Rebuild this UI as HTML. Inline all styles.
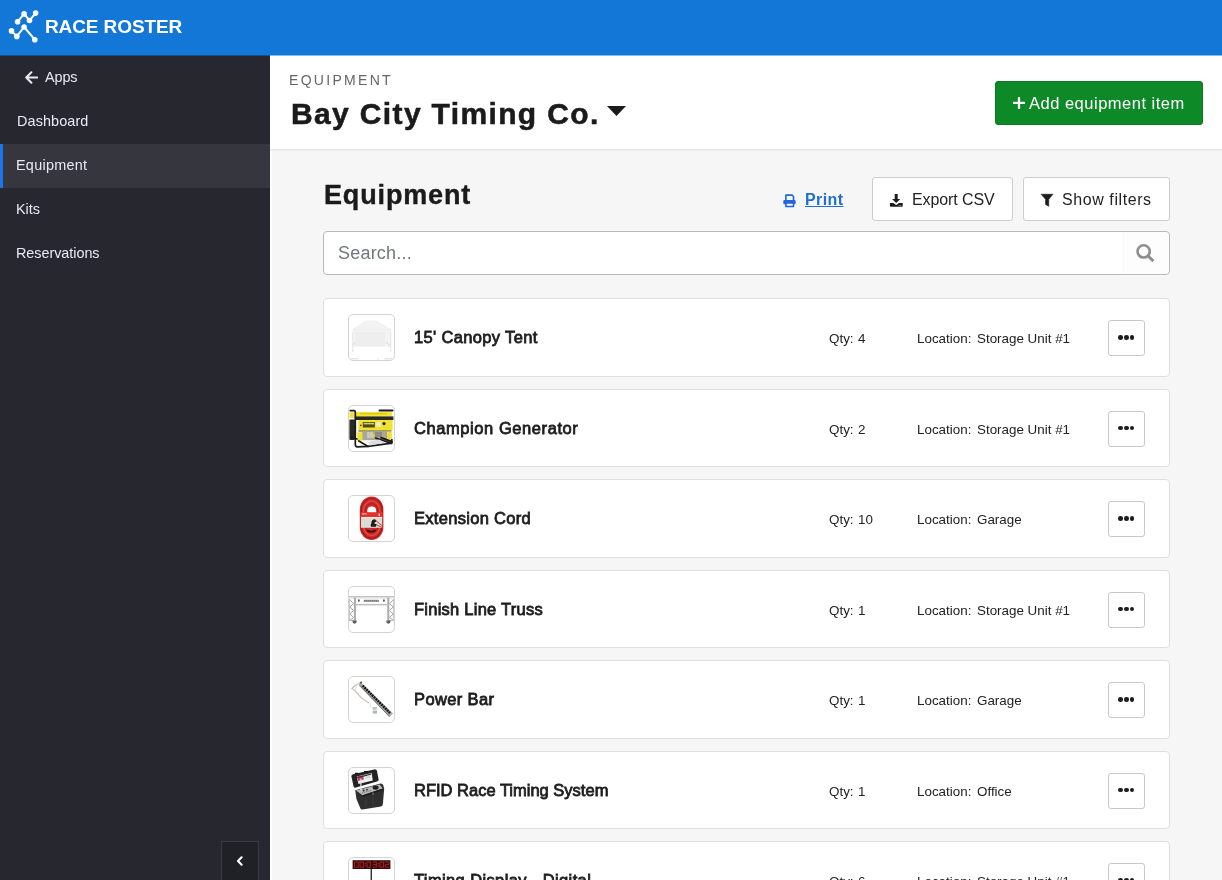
<!DOCTYPE html>
<html lang="en">
<head>
<meta charset="utf-8">
<title>Equipment - Bay City Timing Co.</title>
<style>
*{box-sizing:border-box;margin:0;padding:0}
html,body{width:1222px;height:880px;overflow:hidden}
body{font-family:"Liberation Sans",sans-serif;background:#f6f6f6;color:#1f1f1f;position:relative}
.abs{position:absolute}
.t{position:absolute;white-space:nowrap;line-height:1;will-change:transform}
svg{display:block;position:absolute}
/* top bar */
#topbar{left:0;top:0;width:1222px;height:55px;background:#1277d7}
#brand{left:44.8px;top:17px;font-size:19px;font-weight:bold;color:#fff;letter-spacing:-.1px}
/* sidebar */
#side{left:0;top:55px;width:270px;height:825px;background:#27282f}
#side .nav{position:absolute;left:0;width:270px;height:44px}
#side .nav.on{background:#36373e}
#side .nav.on:before{content:"";position:absolute;left:0;top:0;width:3px;height:44px;background:#1d73e8}
#side .t{color:#e9e9f6;font-size:14.4px}
#collapse{left:221px;top:841px;width:38px;height:40px;background:#202127;border:1px solid #3b3c43}
/* header */
#hdr{left:270px;top:55px;width:952px;height:95px;background:#fff;border-bottom:1px solid #e6e6e6;box-shadow:0 1px 0 #ededed}
#strip{left:270px;top:151px;width:1.5px;height:729px;background:#fff}
#kicker{left:288.8px;top:73px;font-size:14px;letter-spacing:2.3px;color:#666}
#org{left:291.3px;top:99.3px;font-size:30px;font-weight:bold;color:#1b1b1b;letter-spacing:1.36px;-webkit-text-stroke:.55px #1b1b1b}
#addbtn{left:995px;top:81px;width:208px;height:44px;background:#0e8928;border:1px solid #0b7922;border-radius:3px}
#addbtn .t{color:#fff;font-size:16.5px;letter-spacing:.5px}
/* toolbar */
#h2{left:323.5px;top:182.3px;font-size:27px;font-weight:bold;color:#1b1b1b;letter-spacing:.85px;-webkit-text-stroke:.4px #1b1b1b}
#print{left:804.6px;top:192.3px;letter-spacing:.4px;font-size:16px;font-weight:bold;color:#1f6fd1;text-decoration:underline}
.btn{position:absolute;background:#fff;border:1px solid #cdcdcd;border-radius:3px}
.btn .t{font-size:16px;color:#222}
#search{left:323px;top:231px;width:846.5px;height:43.5px;background:#fff;border:1px solid #b9b9b9;border-radius:4px}
#search .ph{left:13.5px;top:12px;font-size:18px;letter-spacing:.2px;color:#72777c}
/* cards */
.card{position:absolute;left:323px;width:846.5px;height:78.5px;background:#fff;border:1px solid #dfdfdf;border-radius:4px}
.thumb{position:absolute;left:24px;top:15px;width:47px;height:47px;border:1px solid #d4d4d4;border-radius:5px;background:#fff;overflow:hidden}
.thumb svg{left:0;top:0}
.card .name{left:89.5px;top:30px;font-size:16.5px;font-weight:normal;color:#1d1d1d;-webkit-text-stroke:.8px #1d1d1d}
.card .q,.card .qv,.card .l,.card .lv{top:33px;font-size:13.4px;color:#222}
.card .q{left:504.6px}.card .qv{left:534px}
.card .l{left:592.5px}.card .lv{left:652.5px}
.more{position:absolute;left:784px;top:21px;width:37px;height:36px;border:1px solid #c9c9c9;border-radius:3px;background:#fff}
.more i{position:absolute;top:14px;width:4.6px;height:4.6px;border-radius:50%;background:#1d1d1d}
</style>
</head>
<body>
<div id="topbar" class="abs"></div>
<div class="abs" style="left:0;top:55px;width:1222px;height:1px;background:rgba(18,119,215,.5);z-index:5"></div>
<svg style="left:6px;top:8px" width="36" height="38" viewBox="6 8 36 38">
  <g fill="none" stroke="#fff" stroke-width="2" stroke-linecap="round" stroke-linejoin="round">
    <polyline points="17.6,21.7 24.1,13.9 29.5,20.5 35.6,13.1"/>
    <polyline points="11.5,30.9 16.8,36.4 24.1,27 34.8,39.7"/>
  </g>
  <g fill="#fff">
    <circle cx="17.6" cy="21.7" r="2.8"/><circle cx="24.1" cy="13.9" r="2.8"/><circle cx="29.5" cy="20.5" r="2.8"/><circle cx="35.6" cy="13.1" r="2.8"/>
    <circle cx="11.5" cy="30.9" r="2.8"/><circle cx="16.8" cy="36.4" r="2.8"/><circle cx="24.1" cy="27" r="2.8"/><circle cx="34.8" cy="39.7" r="2.8"/>
  </g>
</svg>
<div id="brand" class="t">RACE ROSTER</div>

<div id="side" class="abs">
  <div class="nav" style="top:0"></div>
  <div class="nav" style="top:44px"></div>
  <div class="nav on" style="top:89px"></div>
  <div class="nav" style="top:132px"></div>
  <div class="nav" style="top:176px"></div>
  <svg style="left:24.5px;top:15.5px" width="13.5" height="13" viewBox="0 0 13.5 13"><path d="M6.4 1.2 L1.2 6.5 L6.4 11.8 M1.4 6.5 H12.3" fill="none" stroke="#e9e9f6" stroke-width="2" stroke-linecap="round" stroke-linejoin="round"/></svg>
  <div class="t" style="left:45px;top:15px;letter-spacing:-.1px">Apps</div>
  <div class="t" style="left:16.5px;top:59px;letter-spacing:.12px">Dashboard</div>
  <div class="t" style="left:16px;top:103px;letter-spacing:.27px">Equipment</div>
  <div class="t" style="left:16.4px;top:147.4px;letter-spacing:-.05px">Kits</div>
  <div class="t" style="left:16.4px;top:191.4px;letter-spacing:-.04px">Reservations</div>
</div>
<div id="collapse" class="abs"><svg style="left:13.6px;top:14px" width="8" height="10" viewBox="0 0 8 10"><path d="M5.6 1.3 L2 5 L5.6 8.7" fill="none" stroke="#fff" stroke-width="2.1" stroke-linecap="round" stroke-linejoin="round"/></svg></div>

<div id="hdr" class="abs"></div>
<div id="strip" class="abs"></div>
<div id="kicker" class="t">EQUIPMENT</div>
<div id="org" class="t">Bay City Timing Co.</div>
<svg style="left:607px;top:106px" width="19" height="10" viewBox="0 0 19 10"><path d="M0 0 H19 L9.5 10 Z" fill="#1b1b1b"/></svg>
<div id="addbtn" class="abs">
  <svg style="left:17px;top:14.6px" width="12" height="12" viewBox="0 0 12 12"><path d="M6 .9 V10.9 M.7 5.9 H11.3" stroke="#fff" stroke-width="2.3" stroke-linecap="round" fill="none"/></svg>
  <div class="t" style="left:33px;top:12.7px">Add equipment item</div>
</div>

<div id="h2" class="t">Equipment</div>
<svg style="left:783px;top:193.5px" width="14" height="14" viewBox="0 0 14 14"><g fill="none" stroke="#1f66da" stroke-width="1.6" stroke-linejoin="round"><path d="M2.9 5.9 V1.1 H9.1 L10.5 2.5 V5.9"/><rect x="1.1" y="6.7" width="10.8" height="2.8" rx=".6" fill="#1f66da"/><rect x="2.9" y="9" width="7.6" height="3.5" fill="#f6f6f6"/></g></svg>
<div id="print" class="t">Print</div>

<div class="btn" style="left:872px;top:177px;width:141px;height:44px">
  <svg style="left:16px;top:15px" width="15" height="15" viewBox="0 0 15 15"><path d="M5.7 .9 H8.7 V6.1 H11.3 L7.2 10 L3.1 6.1 H5.7 Z" fill="#1d1d1d"/><path d="M.9 10 H4.3 L7.2 12 L10.1 10 H13.7 V13.1 Q13.7 13.8 13 13.8 H1.6 Q.9 13.8 .9 13.1 Z" fill="#1d1d1d"/><rect x="9.6" y="12.4" width="2.6" height=".7" fill="#aaa"/></svg>
  <div class="t" style="left:38.5px;top:14px;letter-spacing:-.1px">Export CSV</div>
</div>
<div class="btn" style="left:1023px;top:177px;width:146.5px;height:44px">
  <svg style="left:16px;top:15px" width="15" height="15" viewBox="0 0 15 15"><path d="M1.2 1.3 H12.9 L8.7 6.3 V13.2 L5.6 11.4 V6.3 Z" fill="#1d1d1d" stroke="#1d1d1d" stroke-width=".7" stroke-linejoin="round"/></svg>
  <div class="t" style="left:38px;top:14px;letter-spacing:.58px">Show filters</div>
</div>

<div id="search" class="abs">
  <div class="abs" style="left:799px;top:0;width:45px;height:41px;background:#fdfdfd;border-left:1px solid #f8f8f8;border-radius:0 4px 4px 0"></div>
  <div class="t ph">Search...</div>
  <svg style="left:811px;top:10.5px" width="21" height="21" viewBox="0 0 21 21"><circle cx="8.65" cy="8.4" r="6.1" fill="none" stroke="#8e8e8e" stroke-width="2.6"/><path d="M12.9 12.7 L18.3 18.1" stroke="#8e8e8e" stroke-width="2.9" stroke-linecap="butt"/></svg>
</div>

<div class="card" style="top:298px">
  <div class="thumb"><svg width="45" height="45" viewBox="0 0 45 45">
<path d="M16.8 5.9 H27.2 L42 14.6 V17 H3.6 V14.6 Z" fill="#f3f3f3"/>
<path d="M16.8 5.9 H27.2 L42 14.6 H3.6 Z" fill="none" stroke="#ededed" stroke-width=".6"/>
<rect x="5.8" y="17" width="31" height="14.6" fill="#eeeeee"/>
<path d="M36.8 17 H42 V33 L36.8 31.6 Z" fill="#f4f4f4"/>
<path d="M3.6 17 H5.8 V31.6 L3.6 33 Z" fill="#f4f4f4"/>
<path d="M3.8 17 V36 M41.8 17 V36" stroke="#e2e2e2" stroke-width=".8" fill="none"/>
<path d="M36.8 27 L41.8 31 M5.8 27.5 L3.8 31" stroke="#e0e0e0" stroke-width="1.2" fill="none"/>
<path d="M3.4 35.2 h1 v1.2 h-1z M41.2 35.2 h1 v1.2 h-1z" fill="#cfcfcf"/>
<path d="M2 43.8 H9 M28.6 43.8 H30 M35.5 43.8 H43" stroke="#d8d8d8" stroke-width="1" fill="none"/>
</svg></div>
  <div class="t name" style="letter-spacing:0.35px">15&#39; Canopy Tent</div>
  <div class="t q">Qty:</div><div class="t qv">4</div>
  <div class="t l">Location:</div><div class="t lv">Storage Unit #1</div>
  <div class="more"><i style="left:9.4px"></i><i style="left:15.1px"></i><i style="left:20.8px"></i></div>
</div>
<div class="card" style="top:388.5px">
  <div class="thumb"><svg width="45" height="45" viewBox="0 0 45 45">
<rect x="0.4" y="6.3" width="5" height="5.6" fill="#f2e23a"/>
<rect x="0.4" y="13.6" width="5.6" height="20.4" rx="1" fill="#2a2a22"/>
<rect x="6.9" y="6" width="36" height="4.4" rx="1" fill="#f4e52e"/>
<rect x="11" y="7" width="27" height="1.4" fill="#d8c728"/>
<rect x="6.9" y="10.4" width="37.5" height="3.6" fill="#2b2a1e"/>
<rect x="9.4" y="14.1" width="34.2" height="10.3" fill="#f2e22c"/>
<rect x="13.8" y="16" width="12" height="5.5" fill="#4a4a20"/>
<rect x="14.6" y="16.8" width="10.4" height="1.6" fill="#d9cf4a"/>
<rect x="27.2" y="16" width="4.6" height="4.8" fill="#ecead0"/>
<circle cx="35" cy="17.6" r="1.6" fill="#222"/>
<circle cx="11.8" cy="19.4" r=".8" fill="#333"/>
<rect x="9.4" y="24.4" width="33" height="1.2" fill="#6a6530"/>
<rect x="13" y="25.6" width="26" height="8.6" fill="#a9a69a"/>
<rect x="18" y="26" width="6" height="6" fill="#c9c7bd"/>
<rect x="26" y="26" width="7" height="5" fill="#8e8b7e"/>
<rect x="38" y="25.6" width="4.8" height="8" fill="#efdf35"/>
<rect x="8.4" y="26.2" width="5" height="8.6" fill="#f1e130"/>
<rect x="23" y="28" width="2.4" height="3.5" fill="#e8d92f"/>
<path d="M0.6 4.6 H5 Q6.3 4.6 6.3 6 V38.4 Q6.3 40.6 8.4 40.9 L19 40.4 L42.8 37.2 V33" fill="none" stroke="#1a1a1a" stroke-width="1.7" stroke-linejoin="round"/>
<path d="M30.4 4.5 H43.6" stroke="#1a1a1a" stroke-width="1.8" stroke-linecap="round" fill="none"/>
<path d="M26.6 32 L42.4 37.4 M32 31.6 L43 35.6 M9.8 35 L19.2 40.4 M8 33 L2 31" stroke="#1a1a1a" stroke-width="1.7" stroke-linecap="round" fill="none"/>
<path d="M19 36 L30 33.4 L36 36.4 L21 39.4Z" fill="#dcdcdc"/>
</svg></div>
  <div class="t name" style="letter-spacing:0.57px">Champion Generator</div>
  <div class="t q">Qty:</div><div class="t qv">2</div>
  <div class="t l">Location:</div><div class="t lv">Storage Unit #1</div>
  <div class="more"><i style="left:9.4px"></i><i style="left:15.1px"></i><i style="left:20.8px"></i></div>
</div>
<div class="card" style="top:479px">
  <div class="thumb"><svg width="45" height="45" viewBox="0 0 45 45">
<rect x="10.8" y="0.4" width="23.6" height="43.6" rx="11.8" ry="13" fill="#cf2a2a"/>
<rect x="12.2" y="2.2" width="20.8" height="40" rx="10.4" ry="12" fill="none" stroke="#9c1c1c" stroke-width="1.1"/>
<rect x="14.4" y="5" width="16.4" height="34.6" rx="8.2" ry="10" fill="none" stroke="#e24a44" stroke-width="1.2"/>
<rect x="16.4" y="7.6" width="12.4" height="29.6" rx="6.2" ry="7" fill="none" stroke="#a32020" stroke-width="1"/>
<path d="M18.3 16.4 V15 Q18.3 10.6 22.7 10.6 Q27.2 10.6 27.2 15 V16.4 Z" fill="#fff"/>
<rect x="11.6" y="16.4" width="22" height="4.6" fill="#e3322e"/>
<rect x="13" y="17.4" width="4.6" height="1" fill="#f6c8c4"/>
<rect x="29.6" y="17.6" width="1.4" height="2.4" fill="#f0d6d2"/>
<rect x="12" y="21" width="21.2" height="10.8" fill="#dcdcd6"/>
<rect x="12" y="21" width="21.2" height="1" fill="#efefe9"/>
<path d="M22.4 25.4 Q24 22.6 26.4 23.4 L27.6 25 L25 27.2 L27.8 28.6 L26.8 30.8 H22 Q20.8 28.8 22.4 27.4Z" fill="#1c1c1c"/>
<path d="M26.6 24.6 L33 29.6 M27.4 28.8 L33 31.4" stroke="#c2332e" stroke-width=".9" fill="none"/>
<path d="M18.4 34.6 Q22.4 36.6 26 34.4" stroke="#3a1010" stroke-width="1.8" fill="none" stroke-linecap="round"/>
</svg></div>
  <div class="t name" style="letter-spacing:0.3px">Extension Cord</div>
  <div class="t q">Qty:</div><div class="t qv">10</div>
  <div class="t l">Location:</div><div class="t lv">Garage</div>
  <div class="more"><i style="left:9.4px"></i><i style="left:15.1px"></i><i style="left:20.8px"></i></div>
</div>
<div class="card" style="top:569.5px">
  <div class="thumb"><svg width="45" height="45" viewBox="0 0 45 45">
<rect x="0" y="9" width="45" height="1.5" fill="#c2c2c2"/>
<rect x="0" y="10.5" width="45" height="1" fill="#dedede"/>
<rect x="6.9" y="16.9" width="31.4" height="1.3" fill="#bdbdbd"/>
<rect x="6.9" y="18.2" width="31.4" height=".8" fill="#e2e2e2"/>
<rect x="4.9" y="10.5" width="2" height="23" fill="#ababab"/>
<rect x="38.3" y="10.5" width="2" height="23" fill="#ababab"/>
<path d="M0.6 12 V33.6 M44.4 12 V33.6" stroke="#c4c4c4" stroke-width="1" fill="none"/>
<path d="M.8 13 L4.6 16.5 L.8 20 L4.6 23.5 L.8 27 L4.6 30.5 L.8 33.4" stroke="#a6a6a6" stroke-width="1" fill="none"/>
<path d="M44.2 13 L40.6 16.5 L44.2 20 L40.6 23.5 L44.2 27 L40.6 30.5 L44.2 33.4" stroke="#a6a6a6" stroke-width="1" fill="none"/>
<rect x="0" y="33" width="6" height="1" fill="#bdbdbd"/><rect x="39" y="33" width="6" height="1" fill="#bdbdbd"/>
<ellipse cx="9.9" cy="13.6" rx=".9" ry="1.3" fill="#555"/>
<ellipse cx="34.9" cy="13.6" rx=".9" ry="1.3" fill="#555"/>
<rect x="14.8" y="12.8" width="15" height="2" fill="#777"/>
<path d="M16 13.8 H29" stroke="#cfcfcf" stroke-width=".5" stroke-dasharray="1.2 .8"/>
<path d="M3.4 33.4 H7.8 L7.2 36 L5.4 36.8 L3.8 35.8Z" fill="#5e5e5e"/>
<path d="M37.2 33.4 H41.6 L41.2 35.8 L39.6 36.8 L37.8 36Z" fill="#5e5e5e"/>
</svg></div>
  <div class="t name" style="letter-spacing:0.25px">Finish Line Truss</div>
  <div class="t q">Qty:</div><div class="t qv">1</div>
  <div class="t l">Location:</div><div class="t lv">Storage Unit #1</div>
  <div class="more"><i style="left:9.4px"></i><i style="left:15.1px"></i><i style="left:20.8px"></i></div>
</div>
<div class="card" style="top:660px">
  <div class="thumb"><svg width="45" height="45" viewBox="0 0 45 45">
<path d="M10.4 6.4 Q5 8.6 3 11.4 Q4.2 12 5.4 13.6 L12.6 21 L19.6 25.8" stroke="#cfc4bf" stroke-width="1.3" fill="none" stroke-linecap="round"/>
<path d="M9.8 6.8 Q6 9 6.4 13 L10 17" stroke="#dcdcdc" stroke-width=".9" fill="none"/>
<path d="M20.6 26.4 Q22.4 28.6 21.4 31" stroke="#d5dbe4" stroke-width=".8" fill="none"/>
<path d="M11.4 5 L44 36.4 L40.4 40 L9.8 8.4 Z" fill="#a9a9a9"/>
<path d="M11 8.6 L40.4 39.6" stroke="#6c6c6c" stroke-width=".9"/>
<path d="M13.6 8.6 L41 36" stroke="#141414" stroke-width="2.5" stroke-dasharray="1.9 .75"/>
<path d="M10.6 5.2 L12.4 4.2 L13.4 5.6 L11.6 7Z" fill="#555"/>
<rect x="23.6" y="30" width="4.2" height="2.8" fill="#c2c5c9"/>
<rect x="23.6" y="33.6" width="4.4" height="3" fill="#b4b8bd"/>
</svg></div>
  <div class="t name" style="letter-spacing:0.37px">Power Bar</div>
  <div class="t q">Qty:</div><div class="t qv">1</div>
  <div class="t l">Location:</div><div class="t lv">Garage</div>
  <div class="more"><i style="left:9.4px"></i><i style="left:15.1px"></i><i style="left:20.8px"></i></div>
</div>
<div class="card" style="top:750.5px">
  <div class="thumb"><svg width="45" height="45" viewBox="0 0 45 45">
<path d="M2.4 8.6 Q2 6.8 4 6.2 L25 1.4 Q27.6 1 28 3 L29.6 11.4 Q29.8 13 28 13.6 L7 19.6 Q5 20 4.6 18.4 Z" fill="#232323"/>
<path d="M6 4.8 H9 V6 H6Z M15 3 H19 V4 H15Z" fill="#111"/>
<path d="M7.8 8.4 L22.6 5 L23.8 12.4 L9.4 16 Z" fill="#f1f1f1"/>
<path d="M8 8.6 L14 7.2 L15 11.6 L9 13 Z" fill="#c2476a"/>
<path d="M8.2 9 L22 5.6 L22.2 6.8 L8.4 10.2Z" fill="#333"/>
<path d="M16 8.4 L21 7.2 L21.6 10 L16.6 11.2Z" fill="#d9d9d9"/>
<path d="M6.2 22.2 L31.6 15.4 Q33.4 15.2 34.2 17 L35.2 20.8 L33.8 36.6 Q33.6 38 32 38.4 L13.4 41.6 Q11.8 41.8 11.2 40 L7.4 30.8 Z" fill="#2f2f2f"/>
<path d="M7 22.6 L30.6 16.4 L33.8 20.4 L13.6 27.2 Z" fill="#b9b9b9"/>
<path d="M13.6 27.2 L33.8 20.4 L34.4 22 L14 29Z" fill="#1d1d1d"/>
<ellipse cx="26.6" cy="19.6" rx="3" ry="2.2" fill="#1f1f1f"/>
<circle cx="14.6" cy="22.6" r="1" fill="#333"/><circle cx="18" cy="21.8" r="1" fill="#444"/>
<path d="M13 25 L22 22.4" stroke="#555" stroke-width=".8" stroke-dasharray="1 1"/>
<rect x="11.3" y="10.8" width="1.2" height="12" fill="#e4e4e4"/>
<rect x="23.4" y="24.6" width="1.2" height="2" fill="#8a8a8a"/>
<path d="M17 30 V39.6 M24 28.4 V38.6" stroke="#3a3a3a" stroke-width="1"/>
</svg></div>
  <div class="t name" style="letter-spacing:0px">RFID Race Timing System</div>
  <div class="t q">Qty:</div><div class="t qv">1</div>
  <div class="t l">Location:</div><div class="t lv">Office</div>
  <div class="more"><i style="left:9.4px"></i><i style="left:15.1px"></i><i style="left:20.8px"></i></div>
</div>
<div class="card" style="top:841px">
  <div class="thumb"><svg width="45" height="45" viewBox="0 0 45 45">
<rect x="3.6" y="2.2" width="37.8" height="8.8" fill="#3a0b0d"/>
<g fill="none" stroke="#a82222" stroke-width=".9">
<rect x="5.6" y="4" width="3.6" height="5.2"/><rect x="11" y="4" width="3.6" height="5.2"/>
<rect x="18" y="4" width="3.6" height="5.2"/><path d="M24 4 H27.4 V9.2 H24 M24 6.6 H27.4"/>
<rect x="31" y="4" width="3.6" height="5.2"/><path d="M36.4 4 H39.8 V6.6 H36.4 V9.2 H39.8"/>
</g>
<path d="M16.4 5.6 v.1 M16.4 7.8 v.1 M29.4 5.6 v.1 M29.4 7.8 v.1" stroke="#a82222" stroke-width="1" stroke-linecap="square"/>
<rect x="21.6" y="11" width="1.3" height="34" fill="#222"/>
</svg></div>
  <div class="t name" style="letter-spacing:0.38px">Timing Display - Digital</div>
  <div class="t q">Qty:</div><div class="t qv">6</div>
  <div class="t l">Location:</div><div class="t lv">Storage Unit #1</div>
  <div class="more"><i style="left:9.4px"></i><i style="left:15.1px"></i><i style="left:20.8px"></i></div>
</div>
</body>
</html>
